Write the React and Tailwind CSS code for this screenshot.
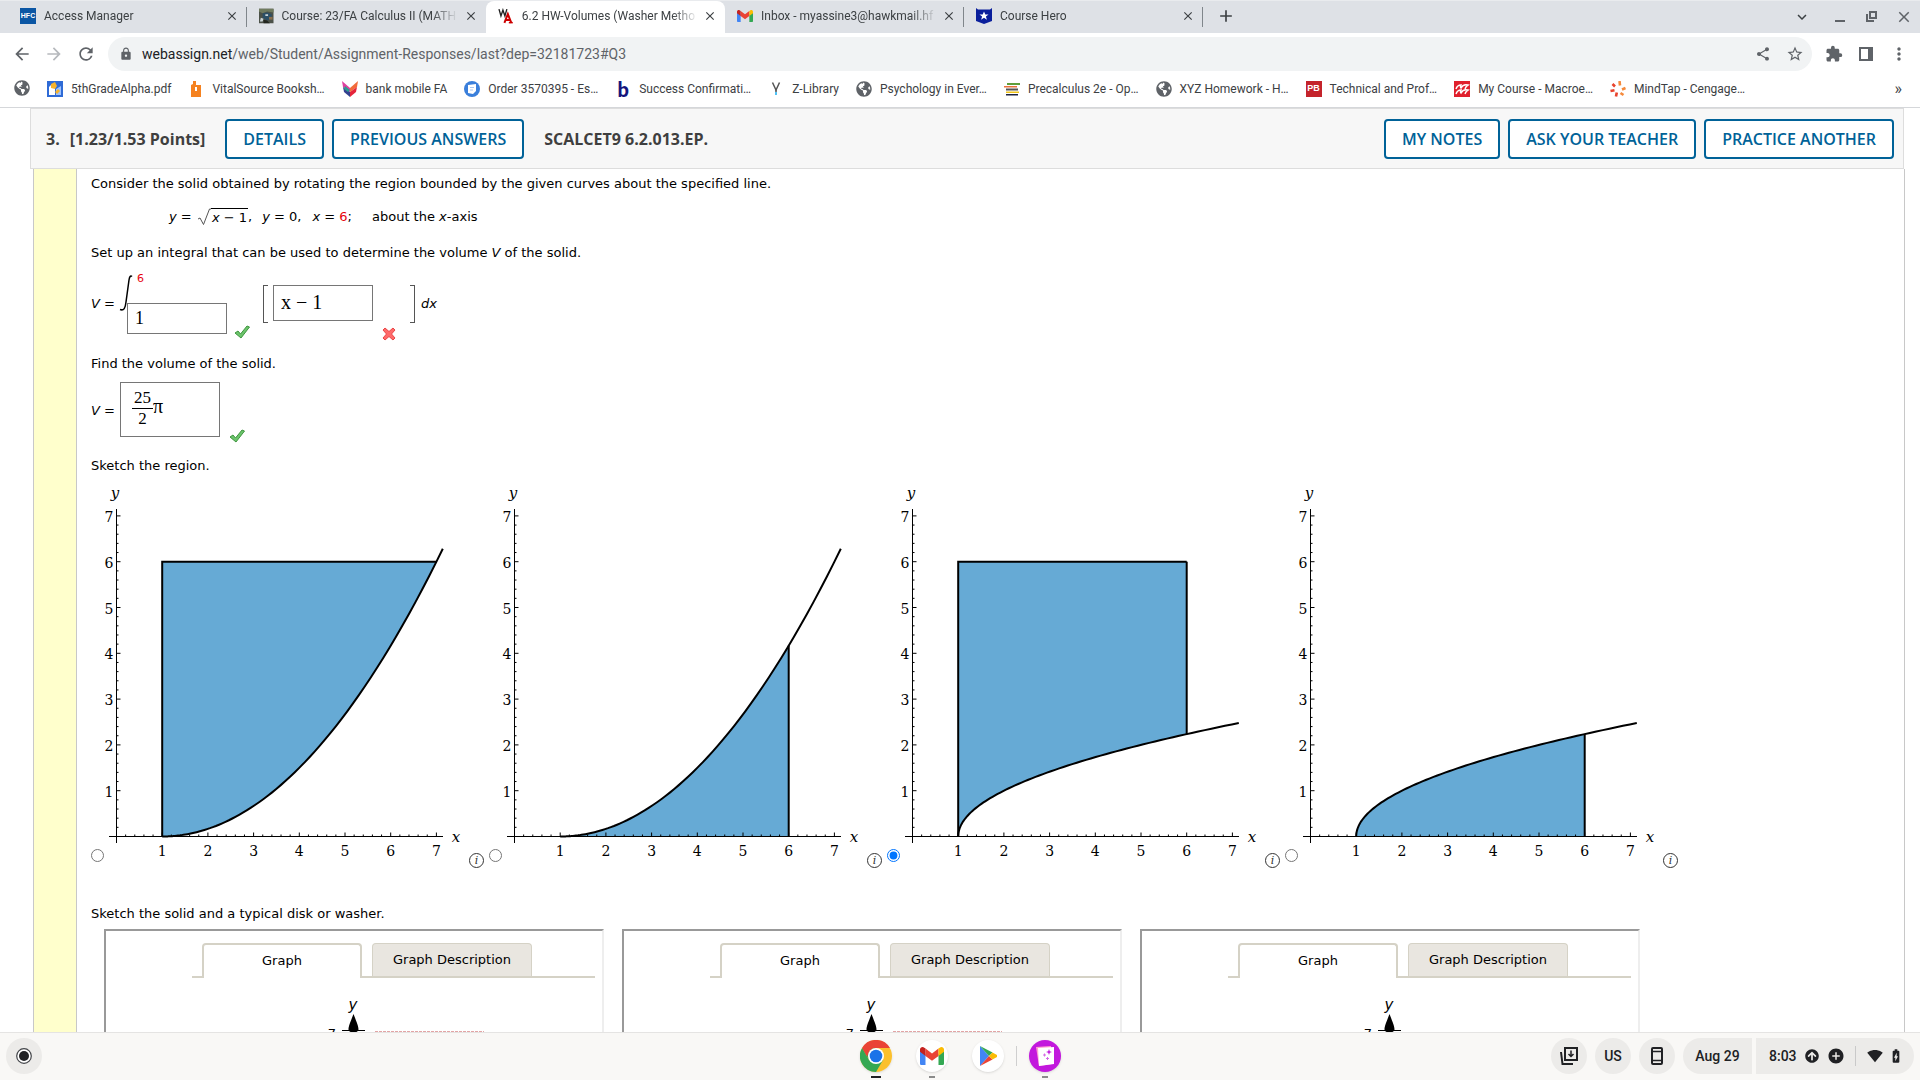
import { useState } from 'react';
import {
  MdAdd,
  MdAddCircle,
  MdArrowBack,
  MdArrowForward,
  MdBatteryChargingFull,
  MdClose,
  MdExpandMore,
  MdExtension,
  MdLock,
  MdMoreVert,
  MdRefresh,
  MdShare,
  MdSignalWifi4Bar,
  MdStarBorder,
} from 'react-icons/md';
import { FaArrowCircleUp, FaGlobeAmericas } from 'react-icons/fa';

const GmailMark = ({ className }) => (
  <svg viewBox="0 0 24 18" className={className}>
    <path d="M0 3v13.4C0 17.3.7 18 1.6 18h3.9V7L0 3z" fill="#4285f4" />
    <path d="M24 3v13.4c0 .9-.7 1.6-1.6 1.6h-3.9V7L24 3z" fill="#34a853" />
    <path d="M5.5 1.6V8.900L12 13.700l6.500-4.800V1.600L12 6.400z" fill="#ea4335" />
    <path d="M0 2.600v2.200l5.500 4.100V1.600L4.300.7C2.500-.7 0 .5 0 2.600z" fill="#c5221f" />
    <path d="M24 2.600v2.200l-5.500 4.100V1.600l1.200-.9c1.800-1.400 4.300-.2 4.300 1.900z" fill="#fbbc04" />
  </svg>
);

const HfcIcon = () => (
  <span className="flex size-4 items-center justify-center bg-[#0b56a4] font-['Liberation_Sans'] text-[7px] font-bold text-white">HFC</span>
);

const PhotoIcon = () => (
  <svg viewBox="0 0 16 16" className="size-4">
    <rect width="16" height="16" fill="#4b5148" />
    <path d="M0 0h16v4L9 3 4 5 0 3z" fill="#6f7a5e" />
    <path d="M4 5l5-1 5 2v5l-5 2-5-3z" fill="#2c4f66" />
    <path d="M7 6h3v2H7zM2 10l3 1-1 3H1z" fill="#c9d3d6" />
    <path d="M11 9h4v3h-4z" fill="#8a6f4d" />
    <path d="M5 12l4 1 3 3H5z" fill="#22251f" />
  </svg>
);

const WebAssignIcon = () => (
  <svg viewBox="0 0 16 16" className="size-4">
    <path d="M1 1l2 7 2-6 2 6 2-7" fill="none" stroke="#222" strokeWidth="1.400" />
    <path d="M6.500 15l3.500-9 3.500 9M8 12h4.500" fill="none" stroke="#c00" strokeWidth="2" />
    <path d="M11 14h4v1.500h-4z" fill="#c00" />
  </svg>
);

const HeroIcon = () => (
  <svg viewBox="0 0 16 16" className="size-4">
    <path d="M0 0l2 1.500h12L16 0v13l-8 3-8-3z" fill="#0a1f9c" />
    <path d="M8 3.500l1.300 3h3.200l-2.600 2 1 3.200L8 9.800l-2.900 1.900 1-3.200-2.600-2h3.200z" fill="#fff" />
  </svg>
);

const TABS = [
  { title: 'Access Manager', icon: <HfcIcon /> },
  { title: 'Course: 23/FA Calculus II (MATH', icon: <PhotoIcon /> },
  { title: '6.2 HW-Volumes (Washer Metho', icon: <WebAssignIcon />, active: true },
  { title: 'Inbox - myassine3@hawkmail.hf', icon: <GmailMark className="w-4" /> },
  { title: 'Course Hero', icon: <HeroIcon /> },
];

const Globe = () => <FaGlobeAmericas className="size-4 text-[#5f6368]" />;

const BOOKMARKS = [
  { label: '', icon: <Globe /> },
  {
    label: '5thGradeAlpha.pdf',
    icon: (
      <svg viewBox="0 0 16 16" className="size-4">
        <rect width="16" height="16" fill="#2f6bd6" />
        <path d="M2 14V6l3-3 3 3v8z" fill="#fff" />
        <path d="M4 3l4-2 2 4-2 3-4-1z" fill="#f7b32b" />
        <path d="M9 8l5-3v9H9z" fill="#9cc2ff" />
        <path d="M8 11l3-3 2 2-3 3z" fill="#f7b32b" />
      </svg>
    ),
  },
  {
    label: 'VitalSource Booksh…',
    icon: (
      <svg viewBox="0 0 16 16" className="size-4">
        <path d="M5 0h3v4h5v12H3V4l2-1z" fill="#f58220" />
        <path d="M7 6h2v4H7z" fill="#fff" />
      </svg>
    ),
  },
  {
    label: 'bank mobile FA',
    icon: (
      <svg viewBox="0 0 16 16" className="size-4">
        <path d="M0 0l8 7v4L1 6z" fill="#e0409f" />
        <path d="M1 6l7 5v5L2 11z" fill="#33408f" />
        <path d="M3 5l5 4-2 2-4-3z" fill="#2a9d8f" />
        <path d="M16 0L8 7v4l7-5z" fill="#f26b3a" />
        <path d="M15 6l-7 5v5l6-5z" fill="#e5243b" />
      </svg>
    ),
  },
  {
    label: 'Order 3570395 - Es…',
    icon: (
      <svg viewBox="0 0 16 16" className="size-4">
        <circle cx="8" cy="8" r="8" fill="#3a7fdb" />
        <path d="M4 4l8-1v7l-3 3-5-1z" fill="#fff" />
        <path d="M6 6.500h4M6 9h3" stroke="#a9c8f2" />
      </svg>
    ),
  },
  {
    label: 'Success Confirmati…',
    icon: <span className="flex size-4 items-center justify-center font-['Lato'] text-[20px] font-black text-[#15157d]">b</span>,
  },
  {
    label: 'Z-Library',
    icon: (
      <svg viewBox="0 0 16 16" className="size-4">
        <path d="M4.500 1.500L8 9l3.500-7.500" fill="none" stroke="#555" strokeWidth="1.500" />
        <path d="M8 8v3" stroke="#555" strokeWidth="1.500" />
        <path d="M8 11v3" stroke="#4fc3f7" strokeWidth="2" />
      </svg>
    ),
  },
  { label: 'Psychology in Ever…', icon: <Globe /> },
  {
    label: 'Precalculus 2e - Op…',
    icon: (
      <svg viewBox="0 0 16 16" className="size-4">
        <path d="M3 2h13v2H3z" fill="#5f9e3a" />
        <path d="M0 5h13v1.500H0z" fill="#e8703a" />
        <path d="M2 7.500h12v2H2z" fill="#555" />
        <path d="M2 10.500h13V12H2z" fill="#f0c419" />
        <path d="M2 13h12v1.500H2z" fill="#1c2340" />
      </svg>
    ),
  },
  { label: 'XYZ Homework - H…', icon: <Globe /> },
  {
    label: 'Technical and Prof…',
    icon: (
      <span className="flex size-4 items-center justify-center bg-[#c4232b] font-['Liberation_Sans'] text-[9px] font-bold text-white">PB</span>
    ),
  },
  {
    label: 'My Course - Macroe…',
    icon: (
      <svg viewBox="0 0 16 16" className="size-4">
        <rect width="16" height="16" fill="#e0202d" />
        <path d="M2 8c1-3 2-4 5-4-1 2-1 2 0 3 1-2 3-4 7-3-2 1-2 2-3 4M2 13c1-3 2-4 5-4-1 2-1 2 0 3 1-2 3-4 7-3-2 1-2 2-3 4" fill="none" stroke="#fff" strokeWidth="1.500" />
      </svg>
    ),
  },
  {
    label: 'MindTap - Cengage…',
    icon: (
      <svg viewBox="0 0 16 16" className="size-4">
        <g stroke="#f58a3c" strokeWidth="2.600" fill="none">
          <path d="M9.500 0l.5 4.500M15.500 7l-3.500 1.500M13.500 14l-3-2" />
          <path d="M6 15.500l.8-4M.5 10l4-.8M2.500 3l2.500 2.500" stroke="#e8432e" />
        </g>
      </svg>
    ),
  },
];

const BrowserTab = ({ title, icon, active }) => (
  <div className={`flex w-[239px] items-center gap-2 pr-2 pb-[2px] pl-3 ${active ? 'rounded-t-lg bg-white' : ''}`}>
    {icon}
    <span className="flex-1 text-[12px] leading-4 whitespace-nowrap [mask-image:linear-gradient(to_right,#000_150px,transparent_176px)]">
      {title}
    </span>
    <button type="button" aria-label={`Close ${title}`} className="text-[#3c4043]">
      <MdClose className="size-[14px]" />
    </button>
  </div>
);

const BrowserChrome = () => (
  <header className="shrink-0 border-b border-[#d5d7da] bg-white font-['Roboto',sans-serif] text-[#3c4043]">
    <div className="flex h-[33px] justify-between border-t border-[#e9ebee] bg-[#dee1e6] pl-2">
      <div className="flex">
        {TABS.map((tab, i) => (
          <div key={tab.title} className="flex">
            <BrowserTab {...tab} />
            {i !== 1 && i !== 2 && <span className="-ml-px h-5 w-px self-center bg-[#80868b]" />}
          </div>
        ))}
        <button type="button" aria-label="New tab" className="ml-[13px] pb-[2px]">
          <MdAdd className="size-5" />
        </button>
      </div>
      <div className="flex items-center gap-[14px] pr-[7px] text-[#3c4043]">
        <button type="button" aria-label="Search tabs" className="mr-[6px]">
          <MdExpandMore className="size-[18px]" />
        </button>
        <button type="button" aria-label="Minimize">
          <svg viewBox="0 0 18 18" className="size-[18px]">
            <path d="M4 13h10" stroke="#5f6368" strokeWidth="2" />
          </svg>
        </button>
        <button type="button" aria-label="Restore">
          <svg viewBox="0 0 18 18" className="size-[18px]" fill="none" stroke="#5f6368" strokeWidth="2">
            <path d="M7 4h6v6H7zM4 6v7h7" />
          </svg>
        </button>
        <button type="button" aria-label="Close window">
          <MdClose className="size-[18px] text-[#5f6368]" />
        </button>
      </div>
    </div>
    <div className="flex h-[42px] items-center pr-[11px] pl-3 text-[#5f6368]">
      <button type="button" aria-label="Back" className="mr-3">
        <MdArrowBack className="size-5" />
      </button>
      <button type="button" aria-label="Forward" className="mr-3 text-[#b6b9bd]">
        <MdArrowForward className="size-5" />
      </button>
      <button type="button" aria-label="Reload" className="mr-3">
        <MdRefresh className="size-5" />
      </button>
      <div className="flex h-[34px] flex-1 items-center rounded-full bg-[#f1f3f4] pr-2 pl-[11px]">
        <MdLock className="mr-[9px] size-[14px]" />
        <p className="flex-1 text-[14px]">
          <span className="text-[#202124]">webassign.net</span>/web/Student/Assignment-Responses/last?dep=32181723#Q3
        </p>
        <button type="button" aria-label="Share" className="mr-[15px]">
          <MdShare className="size-4" />
        </button>
        <button type="button" aria-label="Bookmark this page">
          <MdStarBorder className="size-[18px]" />
        </button>
      </div>
      <button type="button" aria-label="Extensions" className="ml-[13px]">
        <MdExtension className="size-[18px]" />
      </button>
      <button type="button" aria-label="Side panel" className="ml-[15px]">
        <svg viewBox="0 0 16 16" className="size-4">
          <path d="M2 2h12v12H2z" fill="none" stroke="#5f6368" strokeWidth="2" />
          <path d="M10 2h5v12h-5z" fill="#5f6368" />
        </svg>
      </button>
      <button type="button" aria-label="Menu" className="ml-[15px]">
        <MdMoreVert className="size-5" />
      </button>
    </div>
    <nav className="flex h-8 items-center pr-[18px] pb-1 pl-[14px] text-[12px]">
      <ul className="flex flex-1 gap-[17px]">
        {BOOKMARKS.map(({ label, icon }, i) => (
          <li key={i}>
            <a href="#" aria-label={label || 'Bookmark'} className="flex items-center gap-2 whitespace-nowrap">
              {icon}
              {label}
            </a>
          </li>
        ))}
      </ul>
      <button type="button" aria-label="More bookmarks" className="text-[16px] leading-4">»</button>
    </nav>
  </header>
);

const HeaderButton = ({ children }) => (
  <button type="button" className="h-10 rounded-sm border-2 border-[#006298] bg-white px-4 text-[16px] font-semibold text-[#006298]">
    {children}
  </button>
);

const QuestionHeader = () => (
  <div className="mr-4 ml-[30px] flex h-[61px] items-center gap-2 border border-[#ddd] bg-[#f7f7f7] px-[9px] font-['Open_Sans',sans-serif] text-[16px] font-bold text-[#3f3f3f]">
    <span className="ml-[6px]">3.</span>
    <span className="mr-3 ml-[2px]">[1.23/1.53 Points]</span>
    <HeaderButton>DETAILS</HeaderButton>
    <HeaderButton>PREVIOUS ANSWERS</HeaderButton>
    <span className="ml-3 flex-1">SCALCET9 6.2.013.EP.</span>
    <HeaderButton>MY NOTES</HeaderButton>
    <HeaderButton>ASK YOUR TEACHER</HeaderButton>
    <HeaderButton>PRACTICE ANOTHER</HeaderButton>
  </div>
);

const Check = () => (
  <svg viewBox="0 0 16 14" className="w-4" role="img" aria-label="Correct">
    <path d="M1 8l3-2 2.500 3L13 1l2.500 1L7 13z" fill="#6cc46c" stroke="#3f963f" />
  </svg>
);

const Cross = () => (
  <svg viewBox="0 0 14 14" className="w-[14px]" role="img" aria-label="Incorrect">
    <path d="M3 1l4 3.500L11 1l2 2-3.500 4 3.500 4-2 2-4-3.500L3 13l-2-2 3.500-4L1 3z" fill="#ff6a6a" stroke="#ea4545" />
  </svg>
);

// plot area, in svg pixels: origin of the axes and the length of one unit
const OX = 12.5;
const OY = 356.5;
const UNIT_X = 45.7;
const UNIT_Y = 45.8;
const MAX = 7.14;

const px = (x) => OX + x * UNIT_X;
const py = (y) => OY - y * UNIT_Y;

const curvePoints = (fn, to) => {
  const points = [];
  // denser near x = 1 where the root is steep
  for (let i = 0; i <= 80; i++) {
    const x = 1 + (to - 1) * (i / 80) ** 2;
    points.push(`${px(x).toFixed(2)},${py(fn(x)).toFixed(2)}`);
  }
  return points;
};

const parabola = (x) => (x - 1) ** 2 / 6;
const root = (x) => Math.sqrt(x - 1);

const REGIONS = [
  { id: 'a', fn: parabola, to: 7, above: true },
  { id: 'b', fn: parabola, to: 6, above: false },
  { id: 'c', fn: root, to: 6, above: true },
  { id: 'd', fn: root, to: 6, above: false },
];

const RegionPlot = ({ fn, to, above }) => {
  const curve = curvePoints(fn, MAX);
  const edge = curvePoints(fn, to);
  const limit = above ? 6 : 0;
  const fill = [...edge, `${px(to)},${py(limit)}`, `${px(1)},${py(limit)}`];
  const ticks = Array.from({ length: 35 }, (_, i) => i + 1);
  const units = [1, 2, 3, 4, 5, 6, 7];

  return (
    <svg viewBox="0 0 365 388" className="w-[365px] shrink-0 overflow-visible font-['DejaVu_Serif',serif]">
      <polygon points={fill.join(' ')} fill="#66aad5" />
      <g stroke="#000" fill="none">
        <path d={`M5 ${OY}H339M${OX} 29V363`} />
        {ticks.map((t) => {
          const len = t % 5 === 0 ? 4 : 2;
          return <path key={t} d={`M${px(t / 5)} ${OY}v-${len}M${OX} ${py(t / 5)}h${len}`} />;
        })}
        <polyline points={curve.join(' ')} strokeWidth="2" />
        {above && <path d={`M${px(1)} ${OY}V${py(6)}H${px(to)}`} strokeWidth="2" />}
        {to === 6 && <path d={`M${px(6)} ${py(limit)}V${py(fn(6))}`} strokeWidth="2" />}
      </g>
      <g fontSize="14" textAnchor="middle">
        {units.map((u) => (
          <text key={`x${u}`} x={px(u)} y="376">{u}</text>
        ))}
        {units.map((u) => (
          <text key={`y${u}`} x="5" y={py(u) + 6}>{u}</text>
        ))}
      </g>
      <g fontSize="15" fontStyle="italic" textAnchor="middle">
        <text x="11" y="18">y</text>
        <text x="352" y="362">x</text>
      </g>
    </svg>
  );
};

const SolidPanel = ({ washer }) => (
  <section className="w-[500px] shrink-0 border-2 border-t-[#999] border-r-[#eee] border-b-[#eee] border-l-[#999] pt-3">
    <div role="tablist" className="mr-[7px] ml-[86px] flex h-[35px]">
      <span className="w-[10px] border-b-2 border-[#d5d2c6]" />
      <button type="button" role="tab" aria-selected="true" className="w-40 rounded-t border-2 border-b-0 border-[#d5d2c6] bg-white pb-[2px]">
        Graph
      </button>
      <span className="w-[10px] border-b-2 border-[#d5d2c6]" />
      <span className="flex border-b-2 border-[#d5d2c6]">
        <button type="button" role="tab" aria-selected="false" className="w-40 rounded-t border border-b-0 border-[#d5d2c6] bg-[#e9e6e0]">
          Graph Description
        </button>
      </span>
      <span className="flex-1 border-b-2 border-[#d5d2c6]" />
    </div>
    <svg viewBox="0 0 496 120" className="w-full font-['DejaVu_Sans',sans-serif]">
      <text x="247" y="32" fontSize="15" fontStyle="italic" textAnchor="middle">y</text>
      <path d="M247.500 36c-3 8-5 12-5 15.500 0 4 10 4 10 0 0-3.500-2-7.500-5-15.500z" />
      <path d="M236 52.500h23M247.500 50v70" stroke="#000" />
      <text x="226" y="60" fontSize="13" textAnchor="middle">7</text>
      {washer && <path d="M269 53.500h109" stroke="#e2a5a5" strokeDasharray="3 1" />}
    </svg>
  </section>
);

const Question = () => {
  const [region, setRegion] = useState('c');

  return (
    <div className="mr-[15px] ml-[33px] flex min-h-full border-x border-[#c8c8c8]">
      <div className="w-[43px] shrink-0 border-r border-[#c8c8c8] bg-[#ffffcc]" />
      <div className="flex-1 pt-[5px] pl-[14px] font-['DejaVu_Sans',sans-serif] text-[13px] leading-5 text-black">
        <p>Consider the solid obtained by rotating the region bounded by the given curves about the specified line.</p>
        <p className="mt-[13px] flex items-center gap-[10px] pl-[78px] whitespace-pre">
          <span className="flex items-center">
            <span><i>y</i> = </span>
            <svg viewBox="0 0 14 18" className="ml-px h-[18px] w-[14px]">
              <path d="M1 11l2-1 3.500 6.500L12.500 1H14" fill="none" stroke="#555" />
            </svg>
            <span className="-mt-px border-t border-black px-px leading-[17px]"><i>x</i> − 1</span>,
          </span>
          <span><i>y</i> = 0,</span>
          <span className="ml-px"><i>x</i> = <span className="text-red-600">6</span>;</span>
          <span className="ml-[10px]">about the <i>x</i>-axis</span>
        </p>
        <p className="mt-4">
          Set up an integral that can be used to determine the volume <i>V</i> of the solid.
        </p>

        <div className="mt-[11px] flex h-16">
          <span className="mt-[20px] w-7 whitespace-nowrap"><i>V</i> =</span>
          <div>
            <div className="flex">
              <svg viewBox="0 0 16 37" className="w-4">
                <path d="M13 2.500C11.500 1 10.500 3 10 6L7 28C6.300 34 5 37 1 35.500" fill="none" stroke="#000" strokeWidth="1.500" />
              </svg>
              <span className="ml-[2px] text-[11px] leading-[10px] text-red-600">6</span>
            </div>
            <div className="-mt-2 ml-2 flex">
              <input aria-label="Lower limit" defaultValue="1" className="h-[31px] w-[100px] border border-[#767676] bg-white px-[7px] font-['Liberation_Serif',serif] text-[18px]" />
              <span className="mt-[22px] ml-[7px]"><Check /></span>
            </div>
          </div>
          <span className="mt-[11px] ml-[13px] h-[38px] w-[5px] border-y border-l border-[#555]" />
          <input aria-label="Integrand" defaultValue="x − 1" className="mt-[11px] ml-[5px] h-9 w-[100px] border border-[#767676] bg-white px-[7px] pb-[2px] font-['Liberation_Serif',serif] text-[20px]" />
          <span className="mt-[53px] ml-[9px]"><Cross /></span>
          <span className="mt-[11px] ml-[14px] h-[38px] w-[5px] border-y border-r border-[#555]" />
          <i className="mt-[20px] ml-[6px]">dx</i>
        </div>

        <p className="mt-4">Find the volume of the solid.</p>
        <div className="mt-2 flex h-[60px]">
          <span className="mt-[19px] w-[29px] whitespace-nowrap"><i>V</i> =</span>
          <div className="flex h-[55px] w-[100px] items-center border border-[#767676] pb-[3px] pl-[11px] font-['Liberation_Serif',serif] text-[17px]">
            <span className="flex flex-col text-center leading-5">
              <span className="border-b border-black px-[2px]">25</span>
              <span>2</span>
            </span>
            <span className="pb-1 text-[20px]">π</span>
          </div>
          <span className="mt-[47px] ml-[9px]"><Check /></span>
        </div>

        <p className="mt-[14px]">Sketch the region.</p>
        <div className="mt-1 flex">
          {REGIONS.map(({ id, ...plot }) => (
            <label key={id} className="flex w-[398px] shrink-0 items-end">
              <input
                type="radio"
                name="region"
                aria-label={`Region ${id}`}
                checked={region === id}
                onChange={() => setRegion(id)}
                className="mb-[6px] size-[13px] shrink-0"
              />
              <RegionPlot {...plot} />
              <span className="flex size-[15px] items-center justify-center rounded-full border border-[#333] font-['DejaVu_Serif',serif] text-[11px] text-[#333] italic">i</span>
            </label>
          ))}
        </div>

        <p className="mt-9">Sketch the solid and a typical disk or washer.</p>
        <div className="mt-[5px] ml-[13px] flex gap-[18px]">
          <SolidPanel washer />
          <SolidPanel washer />
          <SolidPanel />
        </div>
      </div>
    </div>
  );
};

const ChromeIcon = () => (
  <svg viewBox="0 0 32 32" className="size-8">
    <circle cx="16" cy="16" r="16" fill="#fbc02d" />
    <path d="M2.100 8A16 16 0 0 0 16 32l7-12-7 3-7-3z" fill="#34a853" />
    <path d="M2.100 8l7 12L16 8z" fill="#34a853" />
    <path d="M2.100 8A16 16 0 0 1 29.900 8H16a8 8 0 0 0-7.500 5.500L7 16.500z" fill="#ea4335" />
    <circle cx="16" cy="16" r="8" fill="#fff" />
    <circle cx="16" cy="16" r="6.300" fill="#1a73e8" />
  </svg>
);

const PlayIcon = () => (
  <svg viewBox="0 0 18 20" className="w-[18px]">
    <path d="M1 0v20l9-10z" fill="#4285f4" />
    <path d="M1 0l9 10 3.500-3.500z" fill="#34a853" />
    <path d="M1 20l9-10 3.500 3.500z" fill="#ea4335" />
    <path d="M10 10l3.500-3.500L18 9c.8.500.8 1.500 0 2l-4.500 2.500z" fill="#fbbc04" />
  </svg>
);

const ScreencastIcon = () => (
  <svg viewBox="0 0 20 22" className="w-5">
    <path d="M1 2l15-1 1 18-13 2z" fill="#ff9fd0" />
    <path d="M3 3l16-1v17L4 21z" fill="#fff" />
    <path d="M14 4l.8 2.200L17 7l-2.200.8L14 10l-.8-2.200L11 7l2.200-.8z" fill="#c218dd" />
    <path d="M9.500 8.500v3M8 10h3M12.500 12v3M11 13.500h3" stroke="#d66be6" />
  </svg>
);

const ShelfApp = ({ label, indicator, className, children }) => (
  <button type="button" aria-label={label} className="flex h-12 w-8 flex-col items-center pt-2">
    <span className={`flex size-8 shrink-0 items-center justify-center rounded-full shadow ${className}`}>{children}</span>
    <span className={`mt-[4px] h-[2px] shrink-0 ${indicator}`} />
  </button>
);

const Shelf = () => (
  <footer className="flex h-12 shrink-0 items-center justify-between border-t border-[#e5e4e3] bg-[#f9f8f6] px-[6px] pb-px font-['Roboto',sans-serif] text-[14px] font-medium text-[#202124]">
    <div className="flex flex-1">
      <button type="button" aria-label="Launcher" className="flex size-9 items-center justify-center rounded-full bg-[#ecebe9]">
        <svg viewBox="0 0 16 16" className="size-4">
          <circle cx="8" cy="8" r="7.300" fill="#fff" stroke="#44464a" strokeWidth="1.200" />
          <circle cx="8" cy="8" r="5" fill="#202124" />
        </svg>
      </button>
    </div>
    <div className="ml-px flex items-center gap-6">
      <ShelfApp label="Chrome" indicator="w-[10px] bg-[#202124]" className="">
        <ChromeIcon />
      </ShelfApp>
      <ShelfApp label="Gmail" indicator="w-[6px] bg-[#8a8a8a]" className="bg-white">
        <GmailMark className="w-6" />
      </ShelfApp>
      <ShelfApp label="Play Store" indicator="" className="bg-white">
        <PlayIcon />
      </ShelfApp>
      <span className="-mx-3 h-5 w-px bg-[#cfcfcf]" />
      <ShelfApp label="Screencast" indicator="w-[6px] bg-[#8a8a8a]" className="bg-[#c218dd]">
        <ScreencastIcon />
      </ShelfApp>
    </div>
    <div className="flex flex-1 justify-end">
      <button type="button" aria-label="Tote" className="mr-2 flex size-9 items-center justify-center rounded-full bg-[#ecebe9]">
        <svg viewBox="0 0 20 20" className="size-5" fill="none" stroke="#202124" strokeWidth="2">
          <path d="M6 2h12v12H6zM2 6l1.500 12H14" />
          <path d="M12 4.500v5M9.500 8L12 10.500 14.500 8" strokeWidth="1.500" />
        </svg>
      </button>
      <button type="button" className="mr-2 flex size-9 items-center justify-center rounded-full bg-[#ecebe9]">US</button>
      <button type="button" aria-label="Phone Hub" className="mr-2 flex size-9 items-center justify-center rounded-full bg-[#ecebe9]">
        <svg viewBox="0 0 14 18" className="h-[18px]" fill="none" stroke="#202124">
          <rect x="2" y="1" width="10" height="16" rx="1" strokeWidth="2" />
          <path d="M2 4.500h10M2 13.500h10" strokeWidth="1.500" />
        </svg>
      </button>
      <button type="button" className="mr-1 h-9 w-[69px] rounded-l-full rounded-r bg-[#ecebe9]">Aug 29</button>
      <button type="button" className="flex h-9 w-[158px] items-center rounded-l rounded-r-full bg-[#ecebe9] pl-[13px]">
        8:03
        <FaArrowCircleUp className="ml-2 size-[14px]" />
        <MdAddCircle className="ml-2 size-[18px]" />
        <span className="ml-[10px] h-5 w-px bg-[#c9c9c9]" />
        <MdSignalWifi4Bar className="ml-[11px] size-4" />
        <MdBatteryChargingFull className="ml-[5px] size-4" />
      </button>
    </div>
  </footer>
);

const App = () => (
  <div className="flex h-screen flex-col overflow-hidden bg-white">
    <BrowserChrome />
    <main className="flex-1 overflow-hidden">
      <QuestionHeader />
      <Question />
    </main>
    <Shelf />
  </div>
);

export default App;
